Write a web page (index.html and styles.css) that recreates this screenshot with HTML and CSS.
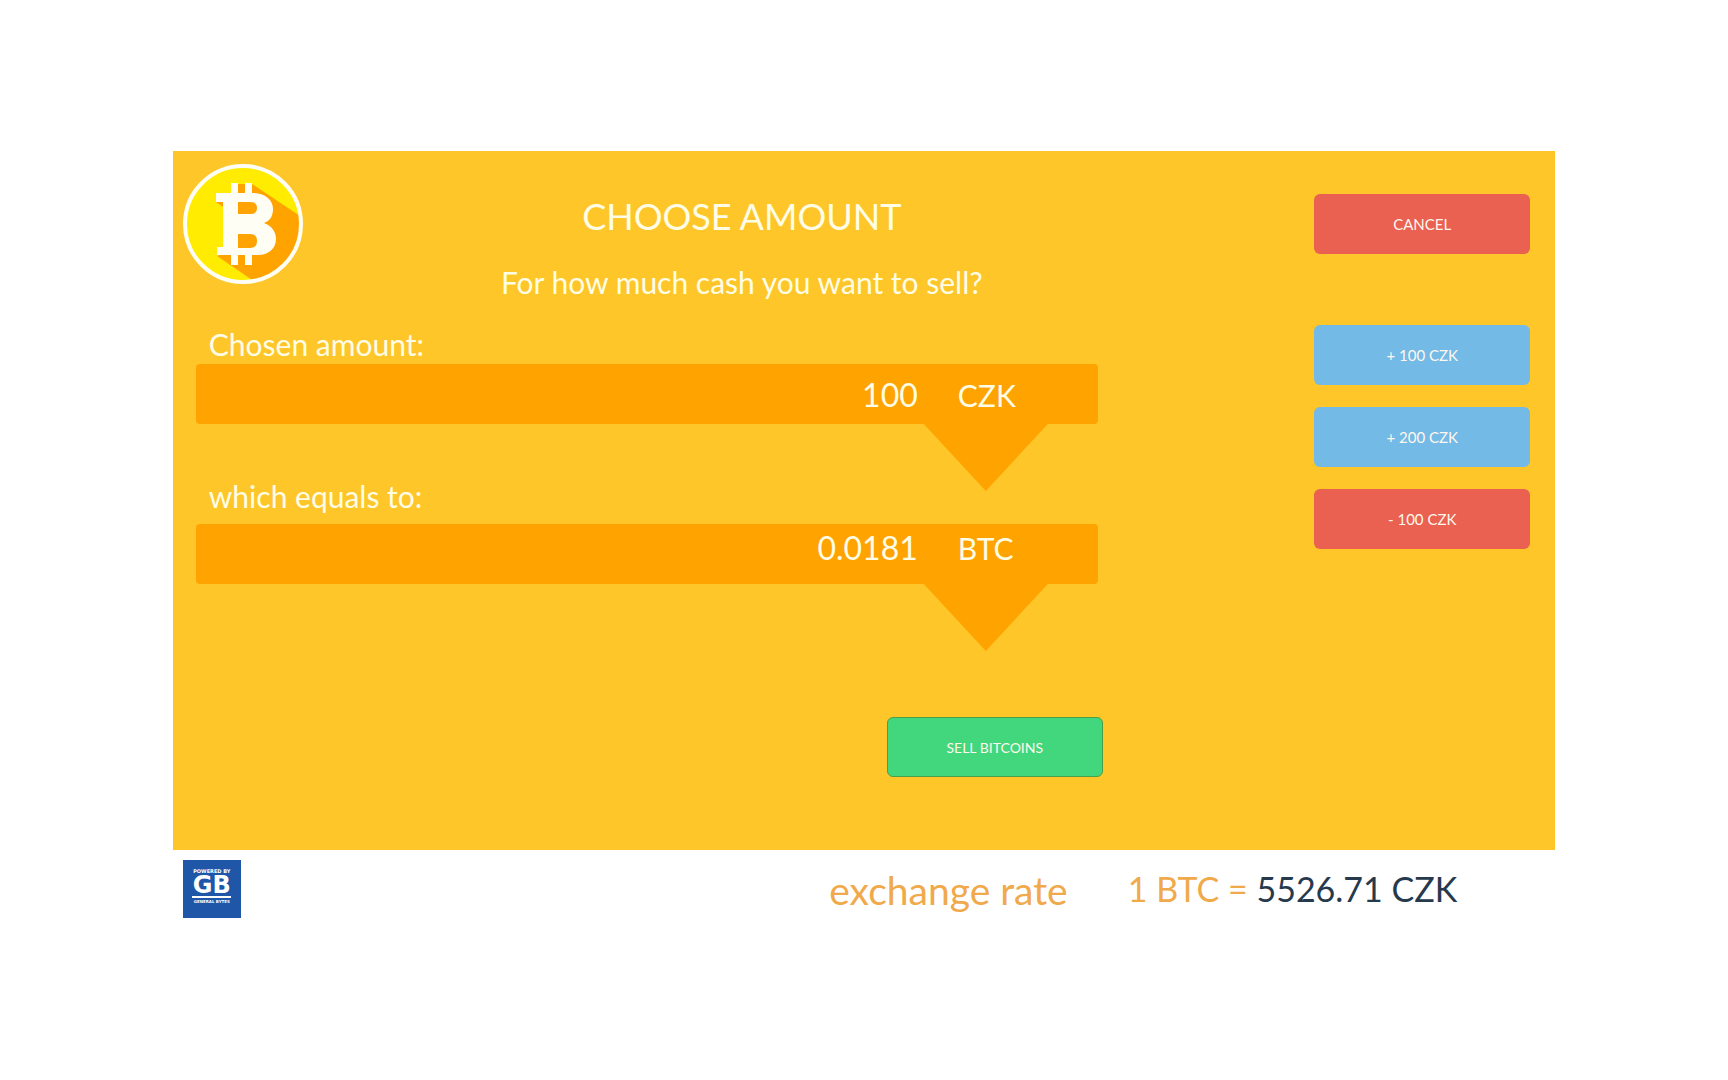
FILE: index.html
```html
<!DOCTYPE html>
<html lang="en">
<head>
    <meta charset="UTF-8">
    <meta name="viewport" content="width=device-width, initial-scale=1.0">
    <title>Choose amount</title>
    <link rel="stylesheet" href="styles.css">
</head>
<body>
    <main class="panel">
        <div class="content">
            <header class="header">
                <svg class="coin" viewBox="0 0 120 120" role="img" aria-label="Bitcoin">
                    <defs>
                        <clipPath id="disc"><circle cx="60" cy="60" r="57"/></clipPath>
                    </defs>
                    <circle cx="60" cy="60" r="57" fill="#ffec00"/>
                    <path clip-path="url(#disc)" fill="#ffa300" d="M50 20H69L120 54V120H75L34 92L50 86V50L33 38H50Z"/>
                    <path fill="#fffef5" fill-rule="evenodd" d="M33 29H48V19H55V29H62V19H69V29C82 29 90 36 90 45C90 52 87 57 81 59C89 62 93 68 93 75C93 85 85 91 75 91H69V101H62V91H55V101H48V91H34V83H40V38H33ZM55 38V50H67Q74 50 74 44Q74 38 67 38ZM55 70V84H67Q74 84 74 77Q74 70 67 70Z"/>
                    <circle cx="60" cy="60" r="58" fill="none" stroke="#fffef5" stroke-width="4"/>
                </svg>
                <div class="titles">
                    <h1>CHOOSE AMOUNT</h1>
                    <p>For how much cash you want to sell?</p>
                </div>
            </header>

            <div class="amounts">
                <label for="cash">Chosen amount:</label>
                <div class="bar">
                    <output id="cash">100</output>
                    <span class="unit">CZK</span>
                </div>
                <label for="coins" class="equals">which equals to:</label>
                <div class="bar bar-coins">
                    <output id="coins">0.0181</output>
                    <span class="unit">BTC</span>
                </div>
            </div>

            <button type="button" class="btn green">SELL BITCOINS</button>
        </div>

        <div class="actions">
            <button type="button" class="btn red cancel">CANCEL</button>
            <button type="button" class="btn blue">+ 100 CZK</button>
            <button type="button" class="btn blue">+ 200 CZK</button>
            <button type="button" class="btn red">- 100 CZK</button>
        </div>
    </main>

    <footer class="footer">
        <div class="powered">
            <span>POWERED BY</span>
            <strong>GB</strong>
            <span class="maker">GENERAL BYTES</span>
        </div>
        <span class="rate-label">exchange rate</span>
        <span class="rate">1 BTC = <span class="price">5526.71 CZK</span></span>
    </footer>
</body>
</html>
```

FILE: styles.css
```css
* { box-sizing: border-box; }
body { font-family: Lato, sans-serif; margin: 0; padding: 151px 10% 40px; background-color: #fff; }
h1, p { margin: 0; font-weight: 400; }

.panel { display: flex; justify-content: space-between; gap: 40px; padding: 13px 25px 73px 10px; background-color: #fec629; color: #fffde6; }
.content { display: flex; flex-direction: column; flex: 1; max-width: 998px; }
.header { display: flex; margin-bottom: 22px; }
.coin { width: 120px; height: 120px; flex: none; }
.titles { flex: 1; padding-top: 28px; text-align: center; }
h1 { font-size: 36px; line-height: 48px; }
.titles p { font-size: 30px; line-height: 40px; margin-top: 22px; }

.amounts { display: flex; flex-direction: column; margin: 0 83px 0 13px; font-size: 32px; line-height: 40px; }
.amounts label { padding-left: 13px; font-size: 30px; }
.amounts .equals { margin: 52px 0 8px; }
.bar { position: relative; display: flex; justify-content: flex-end; gap: 40px; height: 60px; padding: 11px 50px 0 0; border-radius: 4px; background-color: #ffa300; }
.bar-coins { padding-top: 4px; }
.bar::after { content: ""; position: absolute; top: 100%; right: 50px; width: 124px; height: 67px; background-color: #ffa300; clip-path: polygon(0 0, 100% 0, 50% 100%); }
.unit { width: 90px; font-size: 30px; }

.actions { display: flex; flex-direction: column; gap: 22px; padding-top: 30px; }
.btn { width: 216px; height: 60px; padding: 0; border: none; border-radius: 6px; color: #fff8ee; font-family: inherit; font-size: 15px; cursor: pointer; }
.red { background-color: #ea6051; }
.blue { background-color: #73bae7; }
.green { align-self: flex-end; margin: 133px 78px 0 0; background-color: #42d77d; border: 1px solid #4c9f49; font-size: 14px; }
.cancel { margin-bottom: 49px; }

.footer { display: flex; align-items: flex-start; padding: 10px 98px 0 10px; font-size: 34px; line-height: 44px; color: #f0a94b; }
.powered { display: flex; flex-direction: column; align-items: center; justify-content: center; width: 58px; height: 58px; margin-right: auto; padding-bottom: 5px; background-color: #2056a7; color: #fff; font-family: "DejaVu Sans", sans-serif; font-size: 5px; font-weight: 700; line-height: 8px; }
.powered strong { width: 39px; border-bottom: 2px solid #fff; font-size: 24px; line-height: 21px; text-align: center; }
.maker { font-size: 4px; }
.rate-label { margin: 8px 60px 0 0; font-size: 39px; }
.rate { margin-top: 7px; }
.price { color: #26394d; }
```
